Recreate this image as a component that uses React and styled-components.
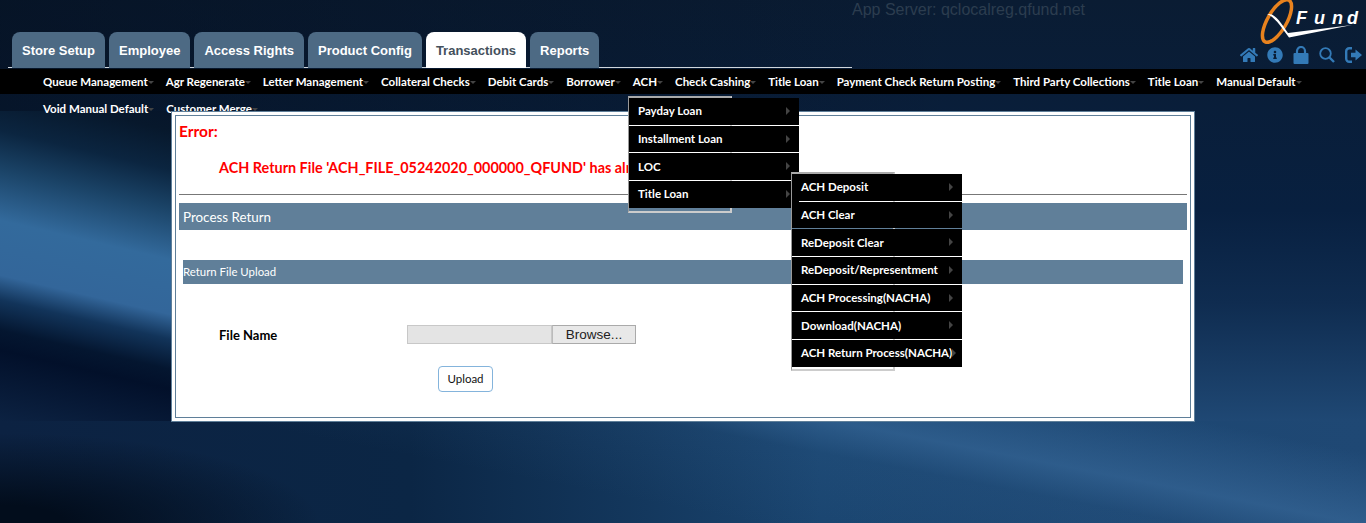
import React from 'react';
import styled, { createGlobalStyle } from 'styled-components';
import { FaHome, FaInfoCircle } from 'react-icons/fa';

const GlobalStyle = createGlobalStyle`
  html, body {
    margin: 0;
    padding: 0;
    height: 100%;
    overflow: hidden;
  }
  body {
    font-family: "Lato", "Noto Sans", sans-serif;
    background-color: #0a2340;
    background-repeat: no-repeat;
    background-image:
      linear-gradient(193deg, #06152a 0%, #07182c 5.700%, #0b2540 16.900%, #1b4468 28.300%, #336a9c 42.600%, #33669a 58.300%, #12345a 65.400%, #041630 74%, #02102a 79.700%, #0c2242 100%),
      radial-gradient(ellipse 320px 90px at 0px 523px, #020d1c 0%, #020d1c 20%, rgba(2, 13, 28, 0) 100%),
      linear-gradient(191deg, rgba(60, 110, 160, 0) 60%, rgba(60, 110, 160, 0.55) 69.500%, rgba(60, 110, 160, 0.12) 74%, rgba(60, 110, 160, 0) 85%),
      linear-gradient(to right, #0c2242 0%, #0b2645 30%, #1a4570 60%, #1f4874 100%),
      linear-gradient(to right, rgba(3, 12, 26, 0.5), rgba(3, 12, 26, 0) 70%),
      linear-gradient(180deg, #0a1c33 0%, #082040 50%, #0f2c50 72%, #1f4874 100%);
    background-size:
      172px 310px,
      100% 100%,
      1194px 523px,
      100% 102px,
      100% 111px,
      100% 421px;
    background-position:
      0 111px,
      0 0,
      172px 0,
      0 421px,
      0 0,
      0 0;
  }
`;

const Page = styled.div`
  position: relative;
  width: 1366px;
  height: 523px;
  overflow: hidden;
`;

const Header = styled.header`
  display: flex;
  height: 68px;
  padding-left: 12px;
  box-sizing: border-box;
`;

const Tabs = styled.nav`
  display: flex;
  gap: 4px;
  align-items: flex-end;
  width: 588px;
`;

const Tab = styled.a`
  display: flex;
  align-items: center;
  height: 36px;
  padding: 0 10px;
  box-sizing: border-box;
  border-radius: 8px 8px 0 0;
  background: ${p => (p.$active ? '#ffffff' : '#4d6a84')};
  color: ${p => (p.$active ? '#44505c' : '#ffffff')};
  font: bold 13px "Liberation Sans", Arial, sans-serif;
`;

const ServerName = styled.div`
  margin: 1px 0 0 252px;
  color: #2c3d4f;
  font: 16px "Liberation Sans", Arial, sans-serif;
`;

const HeaderRight = styled.div`
  display: flex;
  flex-direction: column;
  align-items: flex-end;
  margin-left: auto;
`;

const IconRow = styled.div`
  display: flex;
  align-items: center;
  height: 18px;
  margin-top: 2px;
  color: #337ab7;
`;

const IconSlot = styled.span`
  display: flex;
  justify-content: center;
  width: 26px;
`;

const TabRule = styled.div`
  width: 844px;
  height: 1px;
  margin-left: 8px;
  margin-top: -1px;
  background: #cfd6dc;
`;

const MainNav = styled.ul`
  display: flex;
  flex-wrap: wrap;
  list-style: none;
  margin: 1px 0 0;
  padding: 0 0 0 34px;
  background: linear-gradient(#000 25px, transparent 25px);
`;

const MainItem = styled.li`
  display: flex;
  align-items: center;
  height: 27px;
  padding: 0 9px 2px;
  box-sizing: border-box;
  color: #fff;
  font-size: 11.5px;
  font-weight: 700;
  white-space: nowrap;
`;

const Caret = styled.span`
  width: 0;
  height: 0;
  margin: 2px -6px 0 0;
  border-left: 3px solid transparent;
  border-right: 3px solid transparent;
  border-top: 3px solid #444;
`;

const Panel = styled.main`
  position: relative;
  width: 1024px;
  height: 311px;
  margin: -12px 0 0 171px;
  padding: 3px;
  box-sizing: border-box;
  background: #fff;
  border: 1px solid #5f7f99;
`;

const PanelInner = styled.div`
  height: 100%;
  box-sizing: border-box;
  padding: 3px;
  border: 1px solid #5f7f99;
`;

const ErrorTitle = styled.div`
  margin-top: 3px;
  color: #f00;
  font-size: 15.5px;
  font-weight: 700;
  line-height: 18px;
`;

const ErrorText = styled.div`
  margin: 19px 0 0 40px;
  color: #f00;
  font-size: 14.4px;
  font-weight: 700;
  line-height: 18px;
  white-space: nowrap;
`;

const Divider = styled.hr`
  height: 1px;
  margin: 17px 0 0;
  border: 0;
  background: #777;
`;

const SectionBar = styled.div`
  display: flex;
  align-items: center;
  height: 27px;
  margin-top: 8px;
  padding-left: 4px;
  background: #607f99;
  color: #fff;
  font-size: 13.4px;
`;

const SubBar = styled.div`
  display: flex;
  align-items: center;
  height: 24px;
  margin: 30px 4px 0;
  padding-bottom: 2px;
  box-sizing: border-box;
  background: #607f99;
  color: #fff;
  font-size: 11.4px;
`;

const FileRow = styled.div`
  display: flex;
  align-items: center;
  margin: 41px 0 0 40px;
`;

const FileLabel = styled.label`
  width: 188px;
  font-size: 13px;
  font-weight: 700;
  color: #000;
`;

const FilePath = styled.div`
  width: 145px;
  height: 19px;
  box-sizing: border-box;
  background: #e4e4e4;
  border: 1px solid #c8c8c8;
`;

const BrowseButton = styled.div`
  width: 84px;
  height: 19px;
  box-sizing: border-box;
  display: flex;
  align-items: center;
  justify-content: center;
  background: #e8e8e8;
  border: 1px solid #aaa;
  border-left-color: #bbb;
  color: #222;
  font: 13.5px "Liberation Sans", Arial, sans-serif;
`;

const UploadButton = styled.button`
  display: block;
  width: 55px;
  height: 26px;
  margin: 22px 0 0 259px;
  padding: 0 0 2px;
  background: #fff;
  border: 1px solid #84b4dc;
  border-radius: 4px;
  color: #111;
  font-family: inherit;
  font-size: 11.5px;
`;

const Dropdown = styled.ul`
  position: absolute;
  left: ${p => p.$left}px;
  top: ${p => p.$top}px;
  width: ${p => p.$width}px;
  display: flex;
  flex-direction: column;
  gap: 1px;
  margin: 0;
  padding: 0;
  list-style: none;
`;

const DropdownBacking = styled.div`
  position: absolute;
  left: ${p => p.$left}px;
  top: ${p => p.$top}px;
  width: ${p => p.$width}px;
  height: ${p => p.$height}px;
  box-sizing: border-box;
  border-top: 2px solid #aaa;
  border-left: 1px solid #999;
  border-right: 2px solid #ccc;
  border-bottom: 2px solid #ccc;
`;

const DropdownItem = styled.li`
  display: flex;
  align-items: center;
  justify-content: space-between;
  height: 26.7px;
  padding: 0 9px 1px;
  box-sizing: border-box;
  background: #000;
  color: #fff;
  font-size: 11.5px;
  font-weight: 700;
  white-space: nowrap;
`;

const SideArrow = styled.span`
  width: 0;
  height: 0;
  border-top: 4px solid transparent;
  border-bottom: 4px solid transparent;
  border-left: 4px solid #444;
`;

const Logo = styled.svg`
  display: block;
  width: 106px;
  height: 44px;
`;

const LogoText = styled.text`
  fill: #fff;
  font: italic bold 18px "Liberation Sans", Arial, sans-serif;
`;

const tabs = ['Store Setup', 'Employee', 'Access Rights', 'Product Config', 'Transactions', 'Reports'];
const navRow = [
  'Queue Management', 'Agr Regenerate', 'Letter Management', 'Collateral Checks', 'Debit Cards', 'Borrower', 'ACH',
  'Check Cashing', 'Title Loan', 'Payment Check Return Posting', 'Third Party Collections', 'Title Loan',
  'Manual Default', 'Void Manual Default', 'Customer Merge',
];
const achMenu = ['Payday Loan', 'Installment Loan', 'LOC', 'Title Loan'];
const titleMenu = [
  'ACH Deposit', 'ACH Clear', 'ReDeposit Clear', 'ReDeposit/Representment',
  'ACH Processing(NACHA)', 'Download(NACHA)', 'ACH Return Process(NACHA)',
];

const LockIcon = () => (
  <svg width="16" height="18" viewBox="0 0 16 18" fill="currentColor">
    <rect x="0.5" y="7" width="15" height="11" rx="1" />
    <path d="M4 8V5a4 4 0 0 1 8 0v3" fill="none" stroke="currentColor" strokeWidth="2.2" />
  </svg>
);

const SearchIcon = () => (
  <svg width="16" height="16" viewBox="0 0 16 16" fill="none" stroke="currentColor">
    <circle cx="6.5" cy="6.5" r="5.3" strokeWidth="1.8" />
    <path d="M10.5 10.5L15 15" strokeWidth="2.4" />
  </svg>
);

const LogOutIcon = () => (
  <svg width="17" height="16" viewBox="0 0 17 16" fill="currentColor">
    <path d="M7 1.2H4.2a3 3 0 0 0-3 3v7.6a3 3 0 0 0 3 3H7" fill="none" stroke="currentColor" strokeWidth="2.4" />
    <path d="M6 5.8h4.5V2.6L17 8l-6.500 5.400v-3.200H6z" />
  </svg>
);

export default function App() {
  return (
    <Page>
      <GlobalStyle />
      <Header>
        <Tabs>
          {tabs.map(t => <Tab key={t} $active={t === 'Transactions'}>{t}</Tab>)}
        </Tabs>
        <ServerName>App Server: qclocalreg.qfund.net</ServerName>
        <HeaderRight>
          <Logo viewBox="0 0 106 44">
            <ellipse cx="17" cy="21" rx="9.500" ry="24" transform="rotate(30 17 21)" fill="none" stroke="#e8821e" strokeWidth="3.500" />
            <path d="M7 14 C15 13 20 22 28 33 L92 25 L29 37.500 C21 27 15 17 7 14 Z" fill="#fff" />
            <LogoText x="36 54 72 87" y="24">Fund</LogoText>
          </Logo>
          <IconRow>
            <IconSlot><FaHome size={18} /></IconSlot>
            <IconSlot><FaInfoCircle size={16} /></IconSlot>
            <IconSlot><LockIcon /></IconSlot>
            <IconSlot><SearchIcon /></IconSlot>
            <IconSlot><LogOutIcon /></IconSlot>
          </IconRow>
        </HeaderRight>
      </Header>
      <TabRule />
      <MainNav>
        {navRow.map((n, i) => <MainItem key={i}>{n}<Caret /></MainItem>)}
      </MainNav>
      <Panel>
        <PanelInner>
          <ErrorTitle>Error:</ErrorTitle>
          <ErrorText>ACH Return File 'ACH_FILE_05242020_000000_QFUND' has already been processed</ErrorText>
          <Divider />
          <SectionBar>Process Return</SectionBar>
          <SubBar>Return File Upload</SubBar>
          <FileRow>
            <FileLabel>File Name</FileLabel>
            <FilePath />
            <BrowseButton>Browse...</BrowseButton>
          </FileRow>
          <UploadButton>Upload</UploadButton>
        </PanelInner>
      </Panel>
      <DropdownBacking $left={628} $top={96} $width={104} $height={117} />
      <Dropdown $left={629} $top={98} $width={170}>
        {achMenu.map(m => <DropdownItem key={m}>{m}<SideArrow /></DropdownItem>)}
      </Dropdown>
      <DropdownBacking $left={791} $top={172} $width={104} $height={199} />
      <Dropdown $left={792} $top={174} $width={170}>
        {titleMenu.map(m => <DropdownItem key={m}>{m}<SideArrow /></DropdownItem>)}
      </Dropdown>
    </Page>
  );
}
